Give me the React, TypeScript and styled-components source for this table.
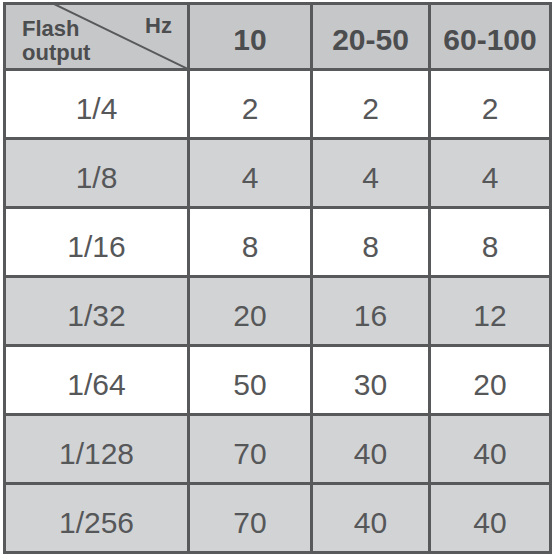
import React from "react";
import styled, { createGlobalStyle } from "styled-components";

const GlobalStyle = createGlobalStyle`
    body {
        margin: 0;
        background: #ffffff;
        font-family: "Liberation Sans", Arial, sans-serif;
    }
`;

const Table = styled.div`
    display: grid;
    grid-template-columns: 181px 120px 115px 118px;
    grid-auto-rows: 66px;
    grid-template-rows: 63px;
    gap: 3px;
    padding: 3px;
    margin: 2px 0 0 3px;
    width: max-content;
    background: #58595b;
`;

const Cell = styled.div<{ $shade: "head" | "grey" | "white" }>`
    display: flex;
    align-items: center;
    justify-content: center;
    padding-top: ${(p) => (p.$shade === "head" ? "6px" : "10px")};
    box-sizing: border-box;
    background: ${(p) =>
        p.$shade === "head" ? "#c6c7c9" : p.$shade === "grey" ? "#d2d3d5" : "#ffffff"};
    font-family: "Liberation Sans", Arial, sans-serif;
    font-size: 30px;
    font-weight: ${(p) => (p.$shade === "head" ? 700 : 400)};
    color: ${(p) => (p.$shade === "head" ? "#4c4d4f" : "#565759")};
`;

const Corner = styled.div`
    position: relative;
    display: flex;
    justify-content: space-between;
    align-items: flex-start;
    padding: 13px 15px 0 16px;
    background: #c6c7c9;
    color: #4c4d4f;
    font-family: "Liberation Sans", Arial, sans-serif;
    font-size: 22px;
    font-weight: 700;
    line-height: 24px;
`;

const CornerLabel = styled.div`
    margin-top: -1px;
`;

const Hz = styled.span`
    margin-top: -4px;
`;

const Diagonal = styled.svg`
    position: absolute;
    left: 0;
    top: 0;
    width: 100%;
    height: 100%;
    pointer-events: none;
`;

const rows: { label: string; values: number[]; grey: boolean }[] = [
    { label: "1/4", values: [2, 2, 2], grey: false },
    { label: "1/8", values: [4, 4, 4], grey: true },
    { label: "1/16", values: [8, 8, 8], grey: false },
    { label: "1/32", values: [20, 16, 12], grey: true },
    { label: "1/64", values: [50, 30, 20], grey: false },
    { label: "1/128", values: [70, 40, 40], grey: true },
    { label: "1/256", values: [70, 40, 40], grey: true },
];

const frequencies = ["10", "20-50", "60-100"];

function App() {
    return (
        <>
            <GlobalStyle />
            <Table>
                <Corner>
                    <Diagonal viewBox="0 0 181 63" preserveAspectRatio="none">
                        <line x1="48" y1="-1" x2="182" y2="64" stroke="#58595b" strokeWidth="2" />
                    </Diagonal>
                    <CornerLabel>
                        Flash
                        <br />
                        output
                    </CornerLabel>
                    <Hz>Hz</Hz>
                </Corner>
                {frequencies.map((f) => (
                    <Cell key={f} $shade="head">
                        {f}
                    </Cell>
                ))}
                {rows.map((row) => (
                    <React.Fragment key={row.label}>
                        <Cell $shade={row.grey ? "grey" : "white"}>{row.label}</Cell>
                        {row.values.map((v, i) => (
                            <Cell key={i} $shade={row.grey ? "grey" : "white"}>
                                {v}
                            </Cell>
                        ))}
                    </React.Fragment>
                ))}
            </Table>
        </>
    );
}

export default App;
